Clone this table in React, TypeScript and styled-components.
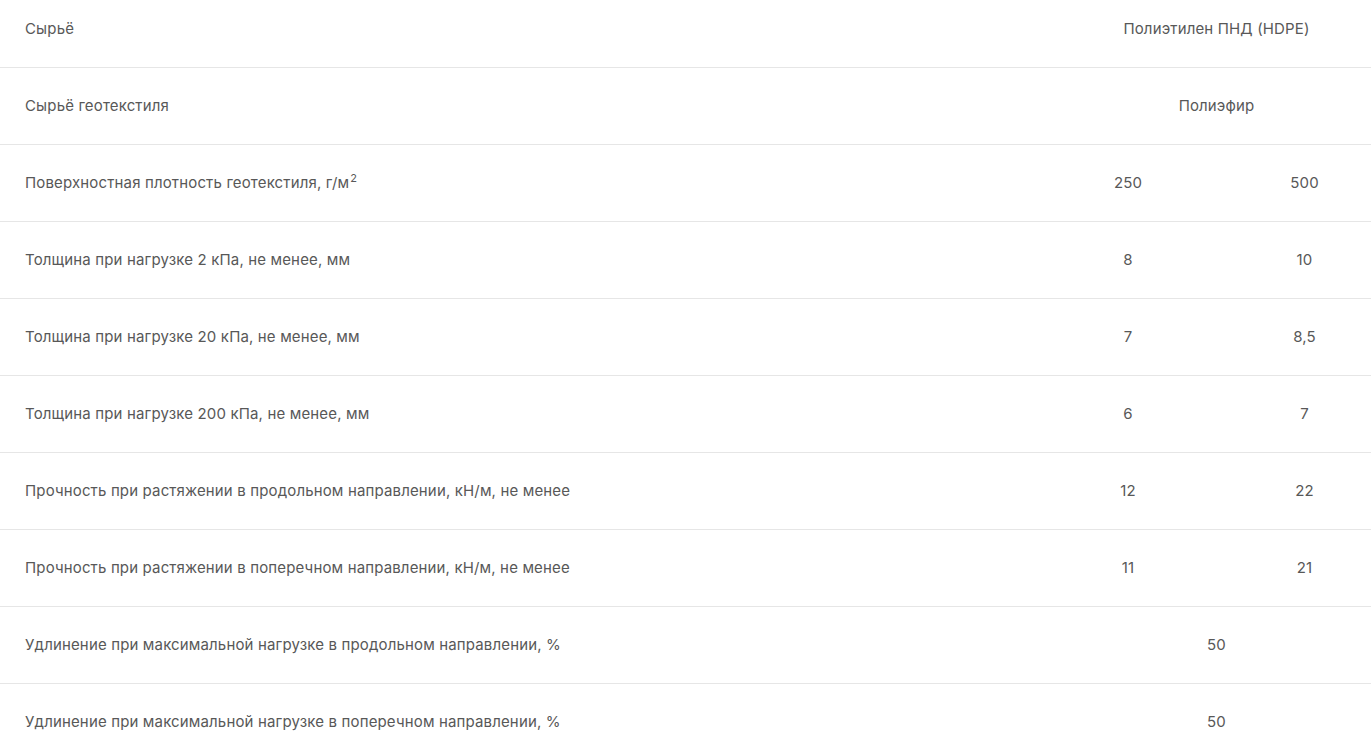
import React from "react";
import styled, { createGlobalStyle } from "styled-components";

const Global = createGlobalStyle`
  html, body { margin: 0; padding: 0; background: #fff; overflow: hidden; }
  body { font-family: Inter, "Noto Sans", sans-serif; }
`;

const Table = styled.div`
  width: calc(100% + 22px);
  display: flex;
  flex-direction: column;
`;

const Row = styled.div<{ $first?: boolean }>`
  box-sizing: border-box;
  display: grid;
  grid-template-columns: 1fr 176px 177px;
  align-items: center;
  height: ${(p) => (p.$first ? 68 : 77)}px;
  padding-bottom: ${(p) => (p.$first ? 10 : 2)}px;
  border-bottom: 1px solid #e6e6e6;
  &:last-child { border-bottom: none; }
`;

const Label = styled.div`
  padding-left: 25px;
  font-size: 15px;
  color: #585858;
  letter-spacing: 0.15px;
  sup { font-size: 11px; line-height: 0; vertical-align: 6px; margin-left: 1px; }
`;

const Value = styled.div<{ $span?: boolean }>`
  grid-column: ${(p) => (p.$span ? "2 / span 2" : "auto")};
  text-align: center;
  font-size: 15px;
  color: #585858;
  letter-spacing: 0.15px;
`;

type R = { label: React.ReactNode; values: string[] };

const rows: R[] = [
  { label: "Сырьё", values: ["Полиэтилен ПНД (HDPE)"] },
  { label: "Сырьё геотекстиля", values: ["Полиэфир"] },
  { label: <>Поверхностная плотность геотекстиля, г/м<sup>2</sup></>, values: ["250", "500"] },
  { label: "Толщина при нагрузке 2 кПа, не менее, мм", values: ["8", "10"] },
  { label: "Толщина при нагрузке 20 кПа, не менее, мм", values: ["7", "8,5"] },
  { label: "Толщина при нагрузке 200 кПа, не менее, мм", values: ["6", "7"] },
  { label: "Прочность при растяжении в продольном направлении, кН/м, не менее", values: ["12", "22"] },
  { label: "Прочность при растяжении в поперечном направлении, кН/м, не менее", values: ["11", "21"] },
  { label: "Удлинение при максимальной нагрузке в продольном направлении, %", values: ["50"] },
  { label: "Удлинение при максимальной нагрузке в поперечном направлении, %", values: ["50"] },
];

export default function App() {
  return (
    <>
      <Global />
      <Table>
        {rows.map((r, i) => (
          <Row key={i} $first={i === 0}>
            <Label>{r.label}</Label>
            {r.values.length === 1 ? (
              <Value $span>{r.values[0]}</Value>
            ) : (
              r.values.map((v, j) => <Value key={j}>{v}</Value>)
            )}
          </Row>
        ))}
      </Table>
    </>
  );
}
